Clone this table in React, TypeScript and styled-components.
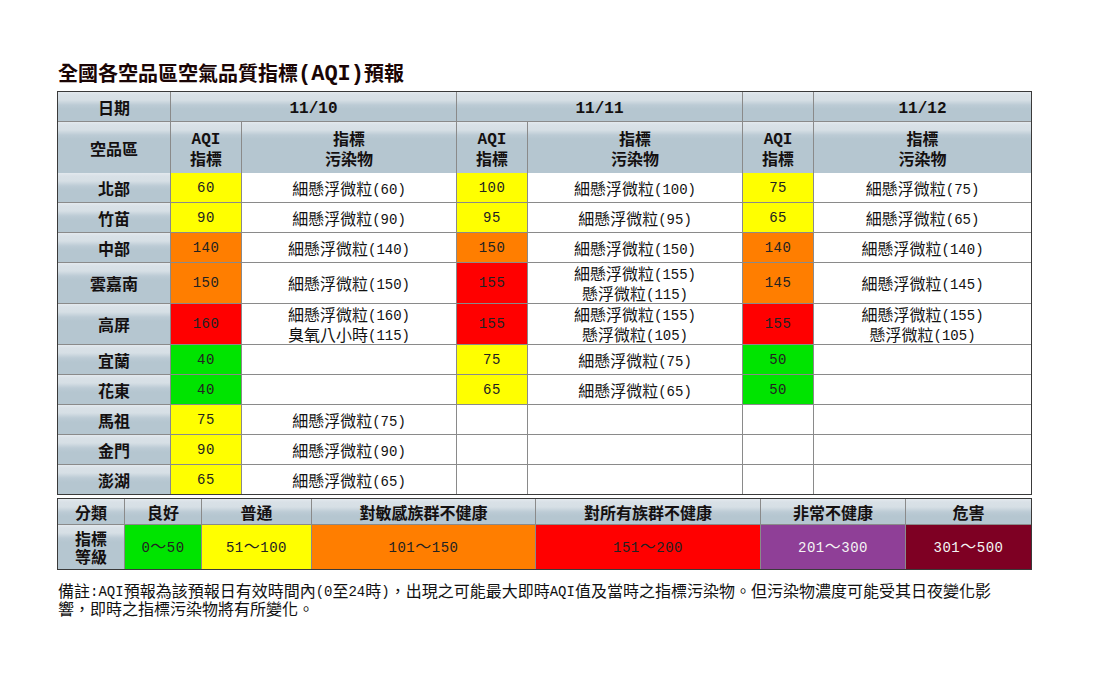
import React from 'react';
import styled, { createGlobalStyle } from 'styled-components';

const CJK = `"Noto Sans CJK TC", "Noto Sans CJK SC", "DejaVu Sans", sans-serif`;
const MONO = `"Liberation Mono", "DejaVu Sans Mono", monospace`;

const GlobalStyle = createGlobalStyle`
  html, body { margin: 0; padding: 0; background: #ffffff; }
  body { font-family: ${CJK}; color: #111; }
`;

const Page = styled.div`
  padding: 59px 0 40px 57px;
  width: 975px;
`;

const Title = styled.h1`
  margin: 0 0 4px 1px;
  height: 28px;
  font: bold 20px/28px ${CJK};
  color: #1a0505;
  white-space: nowrap;
`;

const Num = styled.span<{ $size?: number; $bold?: boolean }>`
  font-family: ${MONO};
  font-size: ${p => p.$size ?? 14}px;
  font-weight: ${p => (p.$bold ? 'bold' : 'normal')};
  line-height: 1;
  vertical-align: 1px;
`;

const Grid = styled.table`
  border-collapse: separate;
  border-spacing: 0;
  border: 1px solid #3a3a3a;
  table-layout: fixed;
  width: 975px;

  & tr:last-child > * {
    border-bottom: none;
  }
`;

const Legend = styled(Grid)`
  margin-top: 3px;
`;

const headBg = `linear-gradient(to bottom, #e3e9ee 0px, #d9e1e7 3px, #d6dfe5 8px, #bccbd5 13px, #b5c6d0 17px, #b5c6d0 100%)`;

const base = `
  box-sizing: border-box;
  padding: 0;
  border-right: 1px solid #8a8a8a;
  border-bottom: 1px solid #8a8a8a;
  text-align: center;
  vertical-align: middle;
  &:last-child { border-right: none; }
`;

const HeadCell = styled.th<{ $h: number; $lh?: number }>`
  ${base}
  height: ${p => p.$h}px;
  background: ${headBg};
  font: bold 16px/${p => p.$lh ?? 20}px ${CJK};
  color: #141010;
`;

const ValueCell = styled.td<{ $h: number; $bg?: string; $fg?: string }>`
  ${base}
  height: ${p => p.$h}px;
  background: ${p => p.$bg ?? '#ffffff'};
  color: ${p => p.$fg ?? '#222'};
  font: 14px/20px ${MONO};
  letter-spacing: 0.5px;
`;

const TextCell = styled.td<{ $h: number }>`
  ${base}
  height: ${p => p.$h}px;
  background: #ffffff;
  font: 16px/20px ${CJK};
  color: #111;
`;

const RangeText = styled.span`
  font: 16px/1 ${CJK};
`;

const Note = styled.p`
  margin: 11px 0 0 1px;
  font: 16px/18px ${CJK};
  color: #111;
  white-space: nowrap;
`;

const mix = (s: string, size?: number, bold?: boolean) =>
  s
    .split(/([\x20-\x7e]+)/)
    .filter(Boolean)
    .map((part, i) =>
      /^[\x20-\x7e]+$/.test(part) ? (
        <Num key={i} $size={size} $bold={bold}>
          {part}
        </Num>
      ) : (
        <React.Fragment key={i}>{part}</React.Fragment>
      )
    );

const aqiColor = (v: number) =>
  v <= 50 ? '#00e400' : v <= 100 ? '#ffff00' : v <= 150 ? '#ff7e00' : '#ff0000';

type Day = { v?: number; p: string[] };
type Region = { name: string; days: Day[] };

const e: Day = { p: [] };
const one = (v: number, t: string): Day => ({ v, p: [t] });

const regions: Region[] = [
  { name: '北部', days: [one(60, '細懸浮微粒(60)'), one(100, '細懸浮微粒(100)'), one(75, '細懸浮微粒(75)')] },
  { name: '竹苗', days: [one(90, '細懸浮微粒(90)'), one(95, '細懸浮微粒(95)'), one(65, '細懸浮微粒(65)')] },
  { name: '中部', days: [one(140, '細懸浮微粒(140)'), one(150, '細懸浮微粒(150)'), one(140, '細懸浮微粒(140)')] },
  {
    name: '雲嘉南',
    days: [
      one(150, '細懸浮微粒(150)'),
      { v: 155, p: ['細懸浮微粒(155)', '懸浮微粒(115)'] },
      one(145, '細懸浮微粒(145)'),
    ],
  },
  {
    name: '高屏',
    days: [
      { v: 160, p: ['細懸浮微粒(160)', '臭氧八小時(115)'] },
      { v: 155, p: ['細懸浮微粒(155)', '懸浮微粒(105)'] },
      { v: 155, p: ['細懸浮微粒(155)', '懸浮微粒(105)'] },
    ],
  },
  { name: '宜蘭', days: [{ v: 40, p: [] }, one(75, '細懸浮微粒(75)'), { v: 50, p: [] }] },
  { name: '花東', days: [{ v: 40, p: [] }, one(65, '細懸浮微粒(65)'), { v: 50, p: [] }] },
  { name: '馬祖', days: [one(75, '細懸浮微粒(75)'), e, e] },
  { name: '金門', days: [one(90, '細懸浮微粒(90)'), e, e] },
  { name: '澎湖', days: [one(65, '細懸浮微粒(65)'), e, e] },
];

const levels = [
  { name: '良好', range: ['0', '50'], bg: '#00e400', fg: '#222' },
  { name: '普通', range: ['51', '100'], bg: '#ffff00', fg: '#222' },
  { name: '對敏感族群不健康', range: ['101', '150'], bg: '#ff7e00', fg: '#222' },
  { name: '對所有族群不健康', range: ['151', '200'], bg: '#ff0000', fg: '#222' },
  { name: '非常不健康', range: ['201', '300'], bg: '#8f3f97', fg: '#f4f4f4' },
  { name: '危害', range: ['301', '500'], bg: '#7e0023', fg: '#f4f4f4' },
];

const mainCols = [113, 71, 215, 71, 215, 71, 217];
const legendCols = [67, 77, 110, 224, 225, 145, 125];

export default function App() {
  return (
    <Page>
      <GlobalStyle />
      <Title>全國各空品區空氣品質指標{mix('(AQI)', 22, true)}預報</Title>
      <Grid>
        <colgroup>
          {mainCols.map((w, i) => (
            <col key={i} style={{ width: w }} />
          ))}
        </colgroup>
        <thead>
          <tr>
            <HeadCell $h={30}>日期</HeadCell>
            <HeadCell $h={30} colSpan={2}>{mix('11/10', 16, true)}</HeadCell>
            <HeadCell $h={30} colSpan={2}>{mix('11/11', 16, true)}</HeadCell>
            <HeadCell $h={30} />
            <HeadCell $h={30}>{mix('11/12', 16, true)}</HeadCell>
          </tr>
          <tr>
            <HeadCell $h={51}>空品區</HeadCell>
            {[0, 1, 2].map(d => (
              <React.Fragment key={d}>
                <HeadCell $h={51}>
                  {mix('AQI', 16, true)}
                  <br />
                  指標
                </HeadCell>
                <HeadCell $h={51}>
                  指標
                  <br />
                  污染物
                </HeadCell>
              </React.Fragment>
            ))}
          </tr>
        </thead>
        <tbody>
          {regions.map((r, ri) => {
            const tall = r.days.some(d => d.p.length > 1);
            const h = ri === regions.length - 1 ? 29 : tall ? 41 : 30;
            return (
              <tr key={r.name}>
                <HeadCell $h={h}>{r.name}</HeadCell>
                {r.days.map((d, di) => (
                  <React.Fragment key={di}>
                    <ValueCell $h={h} $bg={d.v !== undefined ? aqiColor(d.v) : undefined}>
                      {d.v ?? ''}
                    </ValueCell>
                    <TextCell $h={h}>
                      {d.p.map((t, ti) => (
                        <React.Fragment key={ti}>
                          {ti > 0 && <br />}
                          {mix(t)}
                        </React.Fragment>
                      ))}
                    </TextCell>
                  </React.Fragment>
                ))}
              </tr>
            );
          })}
        </tbody>
      </Grid>
      <Legend>
        <colgroup>
          {legendCols.map((w, i) => (
            <col key={i} style={{ width: w }} />
          ))}
        </colgroup>
        <tbody>
          <tr>
            <HeadCell $h={26}>分類</HeadCell>
            {levels.map(l => (
              <HeadCell key={l.name} $h={26}>
                {l.name}
              </HeadCell>
            ))}
          </tr>
          <tr>
            <HeadCell $h={44} $lh={18}>
              指標
              <br />
              等級
            </HeadCell>
            {levels.map(l => (
              <ValueCell key={l.name} $h={44} $bg={l.bg} $fg={l.fg}>
                {l.range[0]}
                <RangeText>～</RangeText>
                {l.range[1]}
              </ValueCell>
            ))}
          </tr>
        </tbody>
      </Legend>
      <Note>
        備註{mix(':AQI')}預報為該預報日有效時間內{mix('(0')}至{mix('24')}時{mix(')')}，出現之可能最大即時{mix('AQI')}值及當時之指標污染物。但污染物濃度可能受其日夜變化影
        <br />
        響，即時之指標污染物將有所變化。
      </Note>
    </Page>
  );
}
